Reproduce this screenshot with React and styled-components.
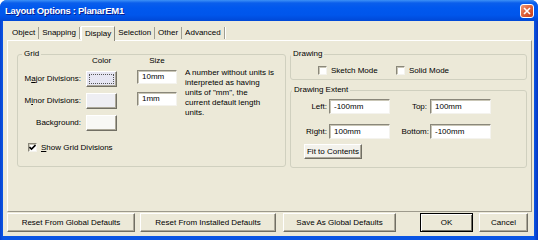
import styled, { createGlobalStyle } from 'styled-components'

const Global = createGlobalStyle`
  html, body { margin: 0; padding: 0; background: #fff; }
  body {
    font-family: "Liberation Sans", Arial, sans-serif;
    font-size: 8px;
    color: #000;
  }
  * { box-sizing: border-box; }
`

const face = '#ECE9D8'

const Window = styled.div`
  width: 538px;
  height: 240px;
  display: flex;
  flex-direction: column;
  background: linear-gradient(90deg, #0842D0 0, #0A55E4 3px, #0A55E4 534px, #0535C0 538px);
  border-radius: 7px 7px 0 0;
  overflow: hidden;
`

const TitleBar = styled.div`
  height: 21px;
  flex: none;
  display: flex;
  align-items: center;
  justify-content: space-between;
  padding: 0 4px 0 5px;
  background: linear-gradient(180deg, #3D91F6 0, #0A5EEC 3px, #0058EE 8px, #0056EC 15px, #0048D6 21px);
`

const Title = styled.span`
  color: #fff;
  font-weight: bold;
  font-size: 9.5px;
  letter-spacing: -0.3px;
  text-shadow: 1px 1px 0 #0A1E8C;
`

const CloseButton = styled.span`
  width: 14px;
  height: 14px;
  display: flex;
  align-items: center;
  justify-content: center;
  border: 1px solid #fff;
  border-radius: 3px;
  background: linear-gradient(135deg, #F09A78 0, #E0643C 45%, #C53E1C 100%);
`

const Body = styled.div`
  flex: 1;
  margin: 0 4px 4px 3px;
  background: ${face};
  display: flex;
  flex-direction: column;
  padding-top: 3px;
`

const TabStrip = styled.div`
  height: 16px;
  display: flex;
  align-items: flex-end;
  padding-left: 6px;
`

const Tab = styled.div`
  height: ${(p) => (p.active ? 15 : 12)}px;
  line-height: ${(p) => (p.active ? 13 : 12)}px;
  padding: 0 3px;
  margin-bottom: ${(p) => (p.active ? -1 : 1)}px;
  background: ${face};
  position: relative;
  z-index: ${(p) => (p.active ? 1 : 0)};
  border-right: 1px solid ${(p) => (p.active ? '#8A877A' : '#A09E92')};
  border-left: ${(p) => (p.active ? '1px solid #fff' : 'none')};
  border-top: ${(p) => (p.active ? '1px solid #fff' : 'none')};
  margin-left: ${(p) => (p.active ? 1 : 0)}px;
  box-shadow: ${(p) => (p.active ? 'none' : '1px 0 0 #fff')};
`

const Panel = styled.div`
  height: 172px;
  margin: 0 2px 0 4px;
  border: 1px solid;
  border-color: #fff #9D9A8C #9D9A8C #fff;
  display: flex;
  gap: 4px;
  padding: 8px 4px 0 9px;
`

const Group = styled.div`
  width: ${(p) => p.w}px;
  height: ${(p) => p.h}px;
  margin-top: ${(p) => p.top}px;
  border: 1px solid #D0D0BF;
  border-radius: 3px;
  display: flex;
  flex-direction: column;
  align-items: flex-start;
`

const Legend = styled.span`
  margin: -6px 0 0 ${(p) => p.indent}px;
  padding: 0 2px;
  line-height: 10px;
  height: 10px;
  background: ${face};
`

const Column = styled.div`
  display: flex;
  flex-direction: column;
`

const GridTable = styled.div`
  margin-top: -3px;
  display: grid;
  grid-template-columns: 68px 51px 48px 1fr;
  grid-template-rows: 14px 22px 22px 22px;
  width: 100%;
`

const Head = styled.div`
  width: ${(p) => p.w}px;
  text-align: center;
  line-height: 10px;
  grid-column: ${(p) => p.col};
`

const RowLabel = styled.div`
  grid-column: 1;
  text-align: right;
  padding-right: 5px;
  margin-top: 1px;
  line-height: 16px;
`

const Swatch = styled.div`
  grid-column: 2;
  width: 31px;
  height: 16px;
  margin-top: 1px;
  background: ${(p) => p.fill};
  border: 1px solid;
  border-color: #fff #716F64 #716F64 #fff;
  box-shadow: inset -1px -1px 0 #ACA899;
  padding: 2px;
`

const FocusRing = styled.div`
  width: 100%;
  height: 100%;
  border: 1px dotted #555;
`

const TextBox = styled.div`
  width: ${(p) => p.w}px;
  height: ${(p) => p.h}px;
  background: #fff;
  border: 1px solid;
  border-color: #8A877A #F4F3EE #F4F3EE #8A877A;
  box-shadow: inset 1px 1px 0 #C9C6B6;
  padding-left: 4px;
  line-height: ${(p) => p.h - 2}px;
  grid-column: ${(p) => p.col || 'auto'};
`

const Help = styled.div`
  grid-column: 4;
  grid-row: 2 / span 3;
  margin-top: -2px;
  line-height: 10px;
  white-space: nowrap;
`

const CheckRow = styled.label`
  display: flex;
  align-items: center;
  gap: 4px;
  height: 12px;
  margin: ${(p) => p.m};
`

const Box = styled.span`
  width: 9px;
  height: 9px;
  flex: none;
  background: #fff;
  border: 1px solid;
  border-color: #8A877A #F4F3EE #F4F3EE #8A877A;
  box-shadow: inset 1px 1px 0 #C9C6B6;
  display: flex;
  align-items: center;
  justify-content: center;
`

const DrawRow = styled.div`
  display: grid;
  grid-template-columns: 78px auto;
  padding-left: 27px;
  margin-top: 5px;
`

const ExtentGrid = styled.div`
  display: grid;
  grid-template-columns: 38px 62px 39px 61px;
  grid-template-rows: 15px 15px;
  row-gap: 10px;
  margin-top: 4px;
`

const FieldLabel = styled.div`
  text-align: right;
  padding-right: ${(p) => p.pad}px;
  line-height: 15px;
`

const PushButton = styled.div`
  width: ${(p) => p.w}px;
  height: ${(p) => p.h}px;
  margin-left: ${(p) => p.space || 0}px;
  flex: none;
  display: flex;
  align-items: center;
  justify-content: center;
  background: ${face};
  border: 1px solid;
  border-color: ${(p) => (p.primary ? '#000' : '#fff #716F64 #716F64 #fff')};
  box-shadow: ${(p) =>
    p.primary
      ? 'inset 1px 1px 0 #fff, inset -1px -1px 0 #716F64'
      : 'inset -1px -1px 0 #ACA899'};
  white-space: nowrap;
`

const FitButton = styled(PushButton)`
  margin: 5px 0 0 13px;
  background: #F3F2EC;
`

const ButtonRow = styled.div`
  display: flex;
  margin-top: 1px;
  padding-left: 4px;
`

function Check({ checked, children, m }) {
  return (
    <CheckRow m={m}>
      <Box>
        {checked && (
          <svg width="7" height="7" viewBox="0 0 7 7">
            <path d="M0.5 3 L2.5 5 L6.5 1" fill="none" stroke="#000" strokeWidth="1.6" />
          </svg>
        )}
      </Box>
      <span>{children}</span>
    </CheckRow>
  )
}

export default function App() {
  return (
    <>
      <Global />
      <Window>
        <TitleBar>
          <Title>Layout Options : PlanarEM1</Title>
          <CloseButton>
            <svg width="8" height="8" viewBox="0 0 8 8">
              <path d="M1 1 L7 7 M7 1 L1 7" stroke="#fff" strokeWidth="1.6" />
            </svg>
          </CloseButton>
        </TitleBar>
        <Body>
          <TabStrip>
            <Tab>Object</Tab>
            <Tab>Snapping</Tab>
            <Tab active>Display</Tab>
            <Tab>Selection</Tab>
            <Tab>Other</Tab>
            <Tab>Advanced</Tab>
          </TabStrip>
          <Panel>
            <Group w={269} h={113} top={5}>
              <Legend indent={4}>Grid</Legend>
              <GridTable>
                <Head col={2} w={31}>Color</Head>
                <Head col={3} w={40}>Size</Head>
                <Head col={4} w={1} />
                <RowLabel>M<u>a</u>jor Divisions:</RowLabel>
                <Swatch fill="#E6E6F3">
                  <FocusRing />
                </Swatch>
                <TextBox w={40} h={14} col={3}>10mm</TextBox>
                <Help>
                  A number without units is
                  <br />
                  interpreted as having
                  <br />
                  units of "mm", the
                  <br />
                  current default length
                  <br />
                  units.
                </Help>
                <RowLabel>M<u>i</u>nor Divisions:</RowLabel>
                <Swatch fill="#EEEEF3" />
                <TextBox w={40} h={14} col={3}>1mm</TextBox>
                <RowLabel>Background:</RowLabel>
                <Swatch fill="#F8F8F5" />
              </GridTable>
              <Check checked m="5px 0 0 10px">
                <u>S</u>how Grid Divisions
              </Check>
            </Group>
            <Column>
              <Group w={237} h={26} top={5}>
                <Legend indent={0}>Drawing</Legend>
                <DrawRow>
                  <Check m="0">Sketch Mode</Check>
                  <Check m="0">Solid Mode</Check>
                </DrawRow>
              </Group>
              <Group w={237} h={78} top={10}>
                <Legend indent={1}>Drawing Extent</Legend>
                <ExtentGrid>
                  <FieldLabel pad={2}>Left:</FieldLabel>
                  <TextBox w={61} h={15}>-100mm</TextBox>
                  <FieldLabel pad={3}>Top:</FieldLabel>
                  <TextBox w={61} h={15}>100mm</TextBox>
                  <FieldLabel pad={2}>Right:</FieldLabel>
                  <TextBox w={61} h={15}>100mm</TextBox>
                  <FieldLabel pad={1}>Bottom:</FieldLabel>
                  <TextBox w={61} h={15}>-100mm</TextBox>
                </ExtentGrid>
                <FitButton w={58} h={15}>Fit to Contents</FitButton>
              </Group>
            </Column>
          </Panel>
          <ButtonRow>
            <PushButton w={128} h={19}>Reset From Global Defaults</PushButton>
            <PushButton w={136} h={19} space={5}>Reset From Installed Defaults</PushButton>
            <PushButton w={113} h={19} space={7}>Save As Global Defaults</PushButton>
            <PushButton w={53} h={19} space={24} primary>OK</PushButton>
            <PushButton w={49} h={19} space={6}>Cancel</PushButton>
          </ButtonRow>
        </Body>
      </Window>
    </>
  )
}
